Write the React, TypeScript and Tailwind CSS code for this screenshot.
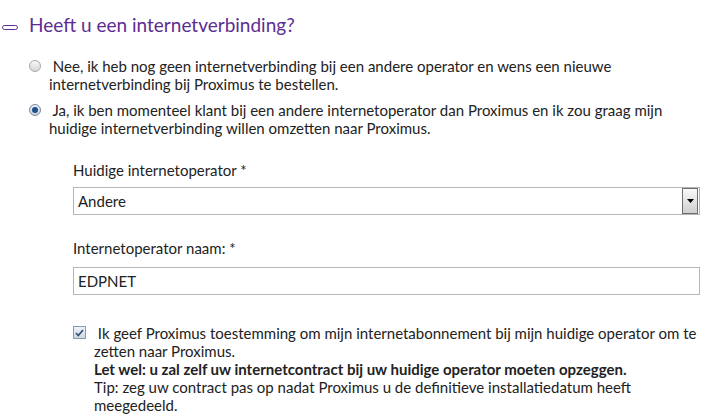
import React from 'react';

const App = () => {
  return (
    <div className="w-[707px] h-[420px] bg-white overflow-hidden text-[15px] leading-[18px] text-[#222]" style={{ fontFamily: 'Lato, "Open Sans", sans-serif' }}>
      {/* heading */}
      <div className="flex items-center pt-[14px] h-[36px]">
        <span className="ml-[2px] mt-[4px] w-[16px] h-[5px] rounded-full border-[1.5px] border-[#5c2d91]" />
        <h2 className="ml-[11px] text-[19px] leading-[24px] text-[#5c2d91]">Heeft u een internetverbinding?</h2>
      </div>

      {/* options */}
      <div className="pl-[29px] pt-[21px] flex flex-col gap-[8px]">
        <label className="flex items-start">
          <span className="mt-[3px] w-[12px] h-[12px] rounded-full border border-[#a8a8a8] bg-gradient-to-b from-[#f8f8f8] to-[#d6d6d6]" />
          <span className="ml-[8px] whitespace-nowrap">
            &nbsp;Nee, ik heb nog geen internetverbinding bij een andere operator en wens een nieuwe
            <br />
            internetverbinding bij Proximus te bestellen.
          </span>
        </label>
        <label className="flex items-start">
          <span className="mt-[3px] w-[12px] h-[12px] rounded-full border border-[#7d8a99] bg-gradient-to-b from-[#e8eef6] to-[#c9d3de] flex items-center justify-center">
            <span className="w-[6px] h-[6px] rounded-full bg-[#1d4f8a]" />
          </span>
          <span className="ml-[8px] whitespace-nowrap">
            &nbsp;Ja, ik ben momenteel klant bij een andere internetoperator dan Proximus en ik zou graag mijn
            <br />
            huidige internetverbinding willen omzetten naar Proximus.
          </span>
        </label>
      </div>

      {/* fields */}
      <div className="pl-[73px] w-[700px] pt-[24px]">
        <div className="mb-[8px]">Huidige internetoperator *</div>
        <div className="flex items-center h-[28px] border border-[#b5b5b5] pl-[4px] pr-[1px]">
          <span className="flex-1">Andere</span>
          <span className="w-[16px] h-[26px] border border-[#6e6e6e] bg-gradient-to-b from-[#fafafa] to-[#cfcfcf] flex items-center justify-center">
            <svg width="7" height="4" viewBox="0 0 7 4"><path d="M0 0h7L3.5 4z" fill="#000" /></svg>
          </span>
        </div>

        <div className="mt-[24px] mb-[10px]">Internetoperator naam: *</div>
        <div className="flex items-center h-[28px] border border-[#b5b5b5] pl-[4px]">EDPNET</div>

        <div className="flex items-start mt-[29px]">
          <span className="mt-[2px] w-[13px] h-[13px] border border-[#8a9ab0] bg-gradient-to-b from-[#eef2f7] to-[#cdd6e2] flex items-center justify-center">
            <svg width="9" height="8" viewBox="0 0 9 8"><path d="M1 4l2.3 2.5L8 1" fill="none" stroke="#2f4e7a" strokeWidth="1.6" /></svg>
          </span>
          <div className="ml-[8px] flex-1 whitespace-nowrap">
            <div>
              &nbsp;Ik geef Proximus toestemming om mijn internetabonnement bij mijn huidige operator om te
              <br />
              zetten naar Proximus.
            </div>
            <div className="font-bold">Let wel: u zal zelf uw internetcontract bij uw huidige operator moeten opzeggen.</div>
            <div>
              Tip: zeg uw contract pas op nadat Proximus u de definitieve installatiedatum heeft
              <br />
              meegedeeld.
            </div>
          </div>
        </div>
      </div>
    </div>
  );
};

export default App;
